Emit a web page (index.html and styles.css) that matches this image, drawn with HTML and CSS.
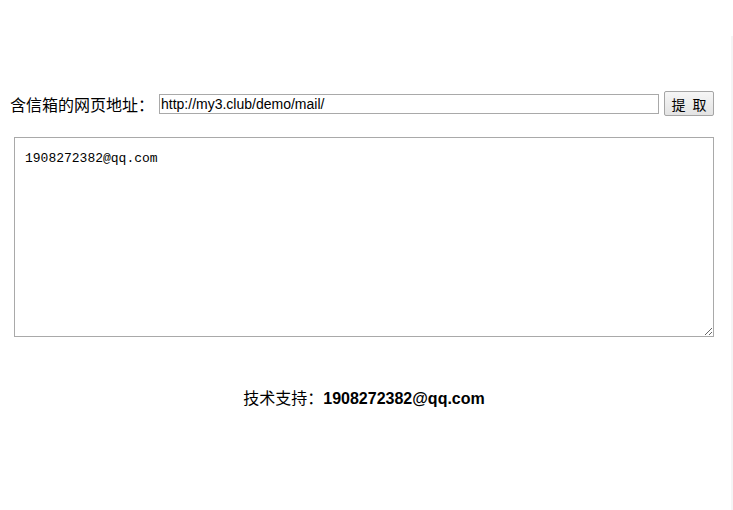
FILE: index.html
```html
<!DOCTYPE html>
<html lang="zh-CN">
<head>
    <meta charset="UTF-8">
    <title>邮箱提取</title>
    <link rel="stylesheet" href="styles.css">
</head>
<body>
    <div class="page">
        <form class="fetch-form">
            <label class="fetch-label" for="url">含信箱的网页地址：</label>
            <input class="fetch-input" id="url" type="text" value="http://my3.club/demo/mail/">
            <button class="fetch-btn" type="button">提 取</button>
        </form>
        <textarea class="result">1908272382@qq.com</textarea>
        <div class="footer">技术支持：<b>1908272382@qq.com</b></div>
    </div>
    <div class="edge"></div>
</body>
</html>
```

FILE: styles.css
```css
body {
    margin: 0;
    background: #fff;
    font-family: "Liberation Sans", "Noto Sans CJK SC", sans-serif;
    color: #000;
}

.page {
    width: 728px;
    padding-top: 91px;
}

.fetch-form {
    display: flex;
    align-items: center;
    margin: 0;
    padding-left: 10px;
    height: 25px;
}

.fetch-label {
    font-family: "Noto Sans CJK SC", sans-serif;
    font-size: 16px;
    width: 149px;
    white-space: nowrap;
}

.fetch-input {
    box-sizing: border-box;
    width: 500px;
    height: 20px;
    margin: 0;
    padding: 0 1px;
    border: 1px solid #a9a9a9;
    font-family: "Liberation Sans", sans-serif;
    font-size: 14px;
    color: #000;
}

.fetch-btn {
    box-sizing: border-box;
    width: 50px;
    height: 25px;
    margin-left: 5px;
    padding: 0 0 0 2px;
    border: 1px solid #a5a5a5;
    border-radius: 2px;
    background: linear-gradient(#f6f6f6, #e3e3e3);
    font-family: "Noto Sans CJK SC", sans-serif;
    font-size: 14px;
    letter-spacing: 2px;
    color: #000;
}

.result {
    display: block;
    box-sizing: border-box;
    width: 700px;
    height: 200px;
    margin: 21px 0 0 14px;
    padding: 13px 10px;
    border: 1px solid #a9a9a9;
    font-family: "Liberation Mono", "Noto Sans CJK SC", monospace;
    font-size: 13px;
    resize: both;
}

.footer {
    margin-top: 48px;
    text-align: center;
    font-size: 16px;
    font-family: "Noto Sans CJK SC", sans-serif;
}

.footer b {
    font-family: "Liberation Sans", sans-serif;
    font-weight: bold;
}

.edge {
    position: fixed;
    top: 36px;
    right: 0;
    width: 2px;
    height: 100%;
    background: #f5f5f5;
}
```
